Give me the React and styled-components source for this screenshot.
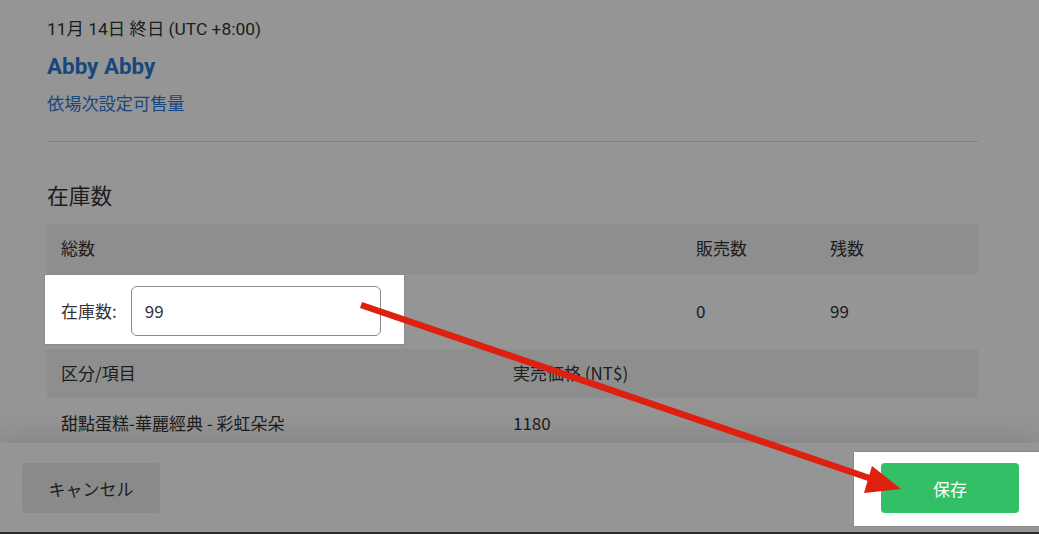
import React from 'react';
import styled, { createGlobalStyle, css } from 'styled-components';

const GlobalStyle = createGlobalStyle`
  html, body {
    margin: 0;
    padding: 0;
    background: #fff;
  }
  body {
    font-family: Roboto, "Noto Sans CJK JP", sans-serif;
    color: #333;
  }
`;

const cjk = css`
  font-family: "Noto Sans CJK JP", "Noto Sans CJK TC", sans-serif;
`;

const Screen = styled.div`
  position: relative;
  width: 1039px;
  height: 534px;
  box-sizing: border-box;
  display: flex;
  flex-direction: column;
  overflow: hidden;
  background: #fff;
  border-bottom: 2px solid #2b2b2b;
`;

const Body = styled.div`
  flex: 1;
  min-height: 0;
  overflow: hidden;
  padding: 17px 61px 0 47px;
`;

const DateLine = styled.div`
  font-size: 17.4px;
  line-height: 24px;
`;

const Name = styled.div`
  margin-top: 11px;
  font-size: 22.4px;
  line-height: 28px;
  font-weight: 700;
  color: #2a7ad6;
`;

const Link = styled.a`
  display: block;
  margin-top: 12px;
  font-size: 17.2px;
  line-height: 24px;
  color: #2a7ad6;
  text-decoration: none;
`;

const Divider = styled.hr`
  margin: 25px 0 0;
  border: none;
  border-top: 1px solid #dcdcdc;
`;

const SectionTitle = styled.h2`
  margin: 39px 0 15px;
  font-size: 21.7px;
  line-height: 28px;
  font-weight: 400;
  ${cjk}
`;

const Row = styled.div`
  display: grid;
  grid-template-columns: ${p => p.cols};
  align-items: center;
  box-sizing: border-box;
  height: ${p => p.h}px;
  padding-bottom: 3px;
  background: ${p => (p.head ? '#f4f4f4' : 'transparent')};
  font-size: 17px;
  ${cjk}
`;

const Cell = styled.div`
  padding-left: 14px;
  white-space: nowrap;
`;

const Spotlight = styled.div`
  position: relative;
  z-index: 11;
  background: #fff;
  border: 1px solid #8a8a8a;
`;

const InputSpot = styled(Spotlight)`
  align-self: start;
  margin-left: -3px;
  width: 361px;
  box-sizing: border-box;
  display: flex;
  align-items: center;
  gap: 14px;
  padding: 11px 23px 8px 16px;
`;

const Label = styled.span`
  flex: none;
  white-space: nowrap;
  font-size: 17px;
  padding-bottom: 2px;
`;

const StockInput = styled.input`
  flex: none;
  width: 250px;
  height: 50px;
  box-sizing: border-box;
  border: 1px solid #8a8a8a;
  border-radius: 6px;
  padding: 0 13px 2px;
  font-size: 17px;
  color: #333;
  ${cjk}
  outline: none;
`;

const Footer = styled.div`
  position: relative;
  height: 89px;
  box-sizing: border-box;
  padding: 20px 20px 0 22px;
  display: flex;
  justify-content: space-between;
  align-items: flex-start;
  background: #fff;
  box-shadow: 0 -6px 30px rgba(0, 0, 0, 0.13);
`;

const Button = styled.button`
  width: 138px;
  height: 50px;
  border: none;
  border-radius: 4px;
  font-size: 17px;
  ${cjk}
  background: ${p => (p.primary ? '#33bf65' : '#ededed')};
  color: ${p => (p.primary ? '#fff' : '#333')};
`;

const SaveSpot = styled(Spotlight)`
  padding: 11px 27px 13px 27px;
  margin: -12px -28px 0 0;
`;

const Dim = styled.div`
  position: absolute;
  inset: 0;
  z-index: 10;
  background: rgba(0, 0, 0, 0.416);
  pointer-events: none;
`;

const Arrow = styled.svg`
  position: absolute;
  left: 0;
  top: 0;
  z-index: 12;
  pointer-events: none;
`;

export default function App() {
  return (
    <Screen>
      <GlobalStyle />
      <Body>
        <DateLine>11月 14日 終日 (UTC +8:00)</DateLine>
        <Name>Abby Abby</Name>
        <Link href="#">依場次設定可售量</Link>
        <Divider />
        <SectionTitle>在庫数</SectionTitle>

        <Row head h={50} cols="635px 134px 1fr">
          <Cell>総数</Cell>
          <Cell>販売数</Cell>
          <Cell>残数</Cell>
        </Row>
        <Row h={75} cols="635px 134px 1fr">
          <InputSpot>
            <Label>在庫数:</Label>
            <StockInput defaultValue="99" />
          </InputSpot>
          <Cell>0</Cell>
          <Cell>99</Cell>
        </Row>
        <Row head h={49} cols="452px 1fr">
          <Cell>区分/項目</Cell>
          <Cell>実売価格 (NT$)</Cell>
        </Row>
        <Row h={52} cols="452px 1fr">
          <Cell>甜點蛋糕-華麗經典 - 彩虹朵朵</Cell>
          <Cell>1180</Cell>
        </Row>
      </Body>

      <Footer>
        <Button>キャンセル</Button>
        <SaveSpot>
          <Button primary>保存</Button>
        </SaveSpot>
      </Footer>

      <Dim />
      <Arrow width="1039" height="534" viewBox="0 0 1039 534">
        <line x1="361" y1="305" x2="872" y2="479" stroke="#dd2010" strokeWidth="6.5" />
        <polygon points="901,489 872,466 864,493" fill="#dd2010" />
      </Arrow>
    </Screen>
  );
}
